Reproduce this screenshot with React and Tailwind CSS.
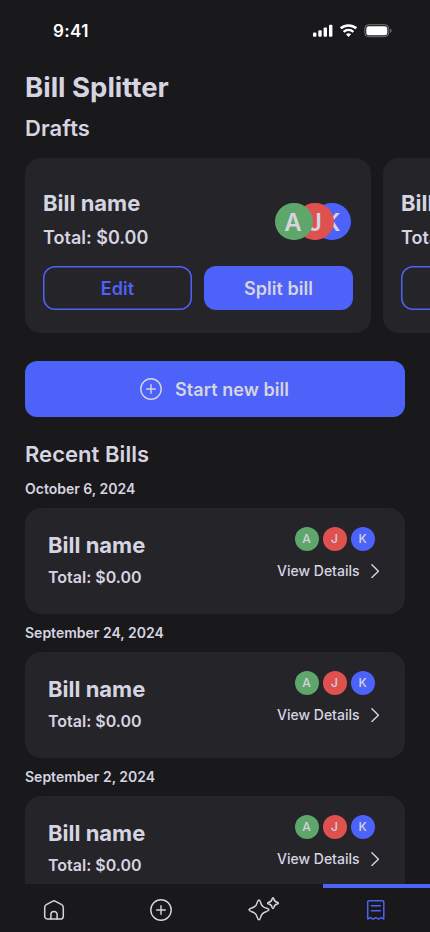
import React from "react";

function StatusBar() {
  return (
    <header className="flex h-[61px] shrink-0 items-center justify-between pr-[38px] pl-[53px] text-white">
      <span className="text-[17px] leading-[22px] font-semibold tracking-[0.4px]">9:41</span>
      <svg width="80" height="14" viewBox="0 0 80 14" fill="none">
        <rect x="1" y="8.500" width="3.4" height="4.3" rx="1" fill="white" />
        <rect x="6.3" y="6.2" width="3.4" height="6.6" rx="1" fill="white" />
        <rect x="11.6" y="3.500" width="3.4" height="9.3" rx="1" fill="white" />
        <rect x="17" y="0.700" width="3.4" height="12.1" rx="1" fill="white" />
        <path d="M28.700 4.300a12 12 0 0 1 15.600 0" stroke="white" strokeWidth="2.5" />
        <path d="M31.600 7.800a7.4 7.4 0 0 1 9.800 0" stroke="white" strokeWidth="2.3" />
        <path d="M36.5 13l-2.600-2.700a4 4 0 0 1 5.2 0z" fill="white" />
        <rect x="52.8" y="0.700" width="24" height="12" rx="4" stroke="white" strokeOpacity=".4" />
        <rect x="54.3" y="2.2" width="21" height="9" rx="2.5" fill="white" />
        <path d="M78.2 4.700v4c.8-.3 1.4-1.1 1.4-2s-.6-1.700-1.400-2z" fill="white" fillOpacity=".4" />
      </svg>
    </header>
  );
}

function PlusCircle() {
  return (
    <svg width="24" height="24" viewBox="0 0 24 24" fill="none" stroke="currentColor" strokeWidth="1.4" strokeLinecap="round">
      <circle cx="12" cy="12" r="10.2" />
      <path d="M12 7.700v8.600M7.700 12h8.600" />
    </svg>
  );
}

function DraftCard() {
  return (
    <article className="h-[175px] w-[346px] shrink-0 rounded-2xl bg-[#252429] px-[18px] pt-8">
      <div className="flex items-start justify-between">
        <div>
          <h3 className="text-[22px] leading-[26px] font-bold">Bill name</h3>
          <p className="mt-[9px] text-[18px] leading-[26px] font-semibold">Total: $0.00</p>
        </div>
        <div className="mt-[13px] mr-[2px] flex text-2xl font-semibold">
          <span className="z-20 flex h-[37px] w-[38px] items-center justify-center rounded-full bg-[#5ea66a] pt-[2px] pr-[2px]">A</span>
          <span className="z-10 -ml-[17px] flex h-[37px] w-[38px] items-center justify-center rounded-full bg-[#df5151] pt-[2px]">J</span>
          <span className="-ml-[21px] flex h-[37px] w-[38px] items-center justify-center rounded-full bg-[#4d62f8] pt-[2px]">K</span>
        </div>
      </div>
      <div className="mt-[15px] flex gap-3 text-[18px] font-semibold tracking-[0.05px]">
        <button className="h-11 w-[149px] rounded-xl text-[#4d62f8] shadow-[inset_0_0_0_1.5px_#4d62f8]">Edit</button>
        <button className="h-11 w-[149px] rounded-xl bg-[#4d62f8]">Split bill</button>
      </div>
    </article>
  );
}

function RecentBill({ date }) {
  return (
    <section className="flex h-36 shrink-0 flex-col">
      <h3 className="h-[30px] pt-[1px] text-[14px] leading-5 font-semibold">{date}</h3>
      <article className="flex h-[106px] justify-between rounded-2xl bg-[#252429] pr-6 pl-[23px]">
        <div className="pt-6">
          <h4 className="text-[22px] leading-[26px] font-bold">Bill name</h4>
          <p className="mt-[7px] text-[16px] leading-6 font-semibold">Total: $0.00</p>
        </div>
        <div className="flex flex-col items-end pt-[19px]">
          <div className="mr-[6px] flex gap-1 text-xs font-medium">
            <span className="flex size-6 items-center justify-center rounded-full bg-[#5ea66a] pr-px">A</span>
            <span className="flex size-6 items-center justify-center rounded-full bg-[#df5151] pr-px">J</span>
            <span className="flex size-6 items-center justify-center rounded-full bg-[#4d62f8] pr-px">K</span>
          </div>
          <a className="mt-[10px] flex items-center gap-[9.5px] text-[14px] leading-5 font-medium">
            View Details
            <svg width="12" height="16" viewBox="0 0 12 16" fill="none" stroke="currentColor" strokeWidth="1.4" strokeLinecap="round" strokeLinejoin="round">
              <path d="M2.900 1.700L9.400 8.200L2.900 14.500" />
            </svg>
          </a>
        </div>
      </article>
    </section>
  );
}

function BottomNav() {
  return (
    <nav className="grid h-12 shrink-0 grid-cols-4 bg-[#19191b]">
      <a className="flex justify-center pt-[14px]">
        <svg width="24" height="24" viewBox="0 0 24 24" fill="none" stroke="currentColor" strokeWidth="1.5" strokeLinecap="round" strokeLinejoin="round">
          <path d="M2.700 9.700C2.700 8.300 3.200 7.300 4.300 6.700L10.500 3.300C11.500 2.700 12.500 2.700 13.500 3.300L19.700 6.700C20.800 7.300 21.300 8.300 21.300 9.700V17.900C21.300 20.100 20.200 21.100 18 21.100H6C3.800 21.100 2.700 20.100 2.700 17.900Z" />
          <path d="M8.900 21.100V16.500a3.100 3.100 0 0 1 6.200 0v4.600" />
        </svg>
      </a>
      <a className="flex justify-center pt-[14px]"><PlusCircle /></a>
      <a className="flex justify-center pt-3">
        <svg className="-ml-[12px]" width="34" height="28" viewBox="0 0 34 28" fill="none" stroke="currentColor" strokeWidth="1.5" strokeLinejoin="round">
          <path d="M11.400 6.100C12.200 3.200 13.700 3.200 14.500 6.100C15.300 9.600 17.200 11.500 20.700 12.300C23.600 13.100 23.600 14.600 20.700 15.400C17.200 16.200 15.300 18.100 14.500 21.600C13.700 24.500 12.200 24.500 11.400 21.600C10.600 18.100 8.700 16.200 5.200 15.400C2.300 14.600 2.300 13.100 5.200 12.300C8.700 11.500 10.600 9.600 11.400 6.100Z" />
          <path d="M26.100 3C26.600 1.400 27.400 1.400 27.900 3C28.300 4.900 29.300 5.900 31.200 6.300C32.800 6.800 32.800 7.600 31.200 8.100C29.300 8.500 28.300 9.500 27.900 11.400C27.400 13 26.600 13 26.100 11.400C25.700 9.500 24.700 8.500 22.800 8.100C21.200 7.600 21.200 6.800 22.800 6.300C24.700 5.900 25.700 4.900 26.100 3Z" />
        </svg>
      </a>
      <a className="flex justify-center border-t-4 border-[#4d62f8] pt-[10px] text-[#4d62f8]">
        <svg width="24" height="24" viewBox="0 0 24 24" fill="none" stroke="currentColor" strokeWidth="1.5" strokeLinecap="round" strokeLinejoin="round">
          <path d="M3.700 21V4.100Q3.700 2.700 5.100 2.700H18.400Q19.800 2.700 19.800 4.100V21L17.200 19.600L14.500 21.200L11.800 19.600L9.100 21.200L6.400 19.600Z" />
          <path d="M7.400 7.700h8.900M7.400 12.700h8.900" />
        </svg>
      </a>
    </nav>
  );
}

export default function App() {
  return (
    <div className="flex h-[932px] w-[430px] flex-col overflow-hidden bg-[#19191b] font-['Inter',sans-serif] text-[#d6d4e0]">
      <StatusBar />
      <main className="min-h-0 flex-1 overflow-hidden px-[25px]">
        <h1 className="pt-[9px] text-[27.5px] leading-[34px] font-bold">Bill Splitter</h1>
        <h2 className="mt-[11px] text-[22px] leading-[26px] font-semibold tracking-[0.1px]">Drafts</h2>
        <div className="mt-[17px] -mr-[25px] flex gap-3 overflow-hidden">
          <DraftCard />
          <DraftCard />
        </div>
        <button className="mt-7 flex h-14 w-full items-center justify-center gap-3 rounded-xl bg-[#4d62f8] pr-[2px] text-[18px] font-semibold tracking-[0.05px]">
          <PlusCircle />
          Start new bill
        </button>
        <h2 className="mt-6 mb-[11px] text-[22px] leading-[26px] font-semibold tracking-[0.05px]">Recent Bills</h2>
        <div className="flex flex-col">
          <RecentBill date="October 6, 2024" />
          <RecentBill date="September 24, 2024" />
          <RecentBill date="September 2, 2024" />
        </div>
      </main>
      <BottomNav />
    </div>
  );
}
